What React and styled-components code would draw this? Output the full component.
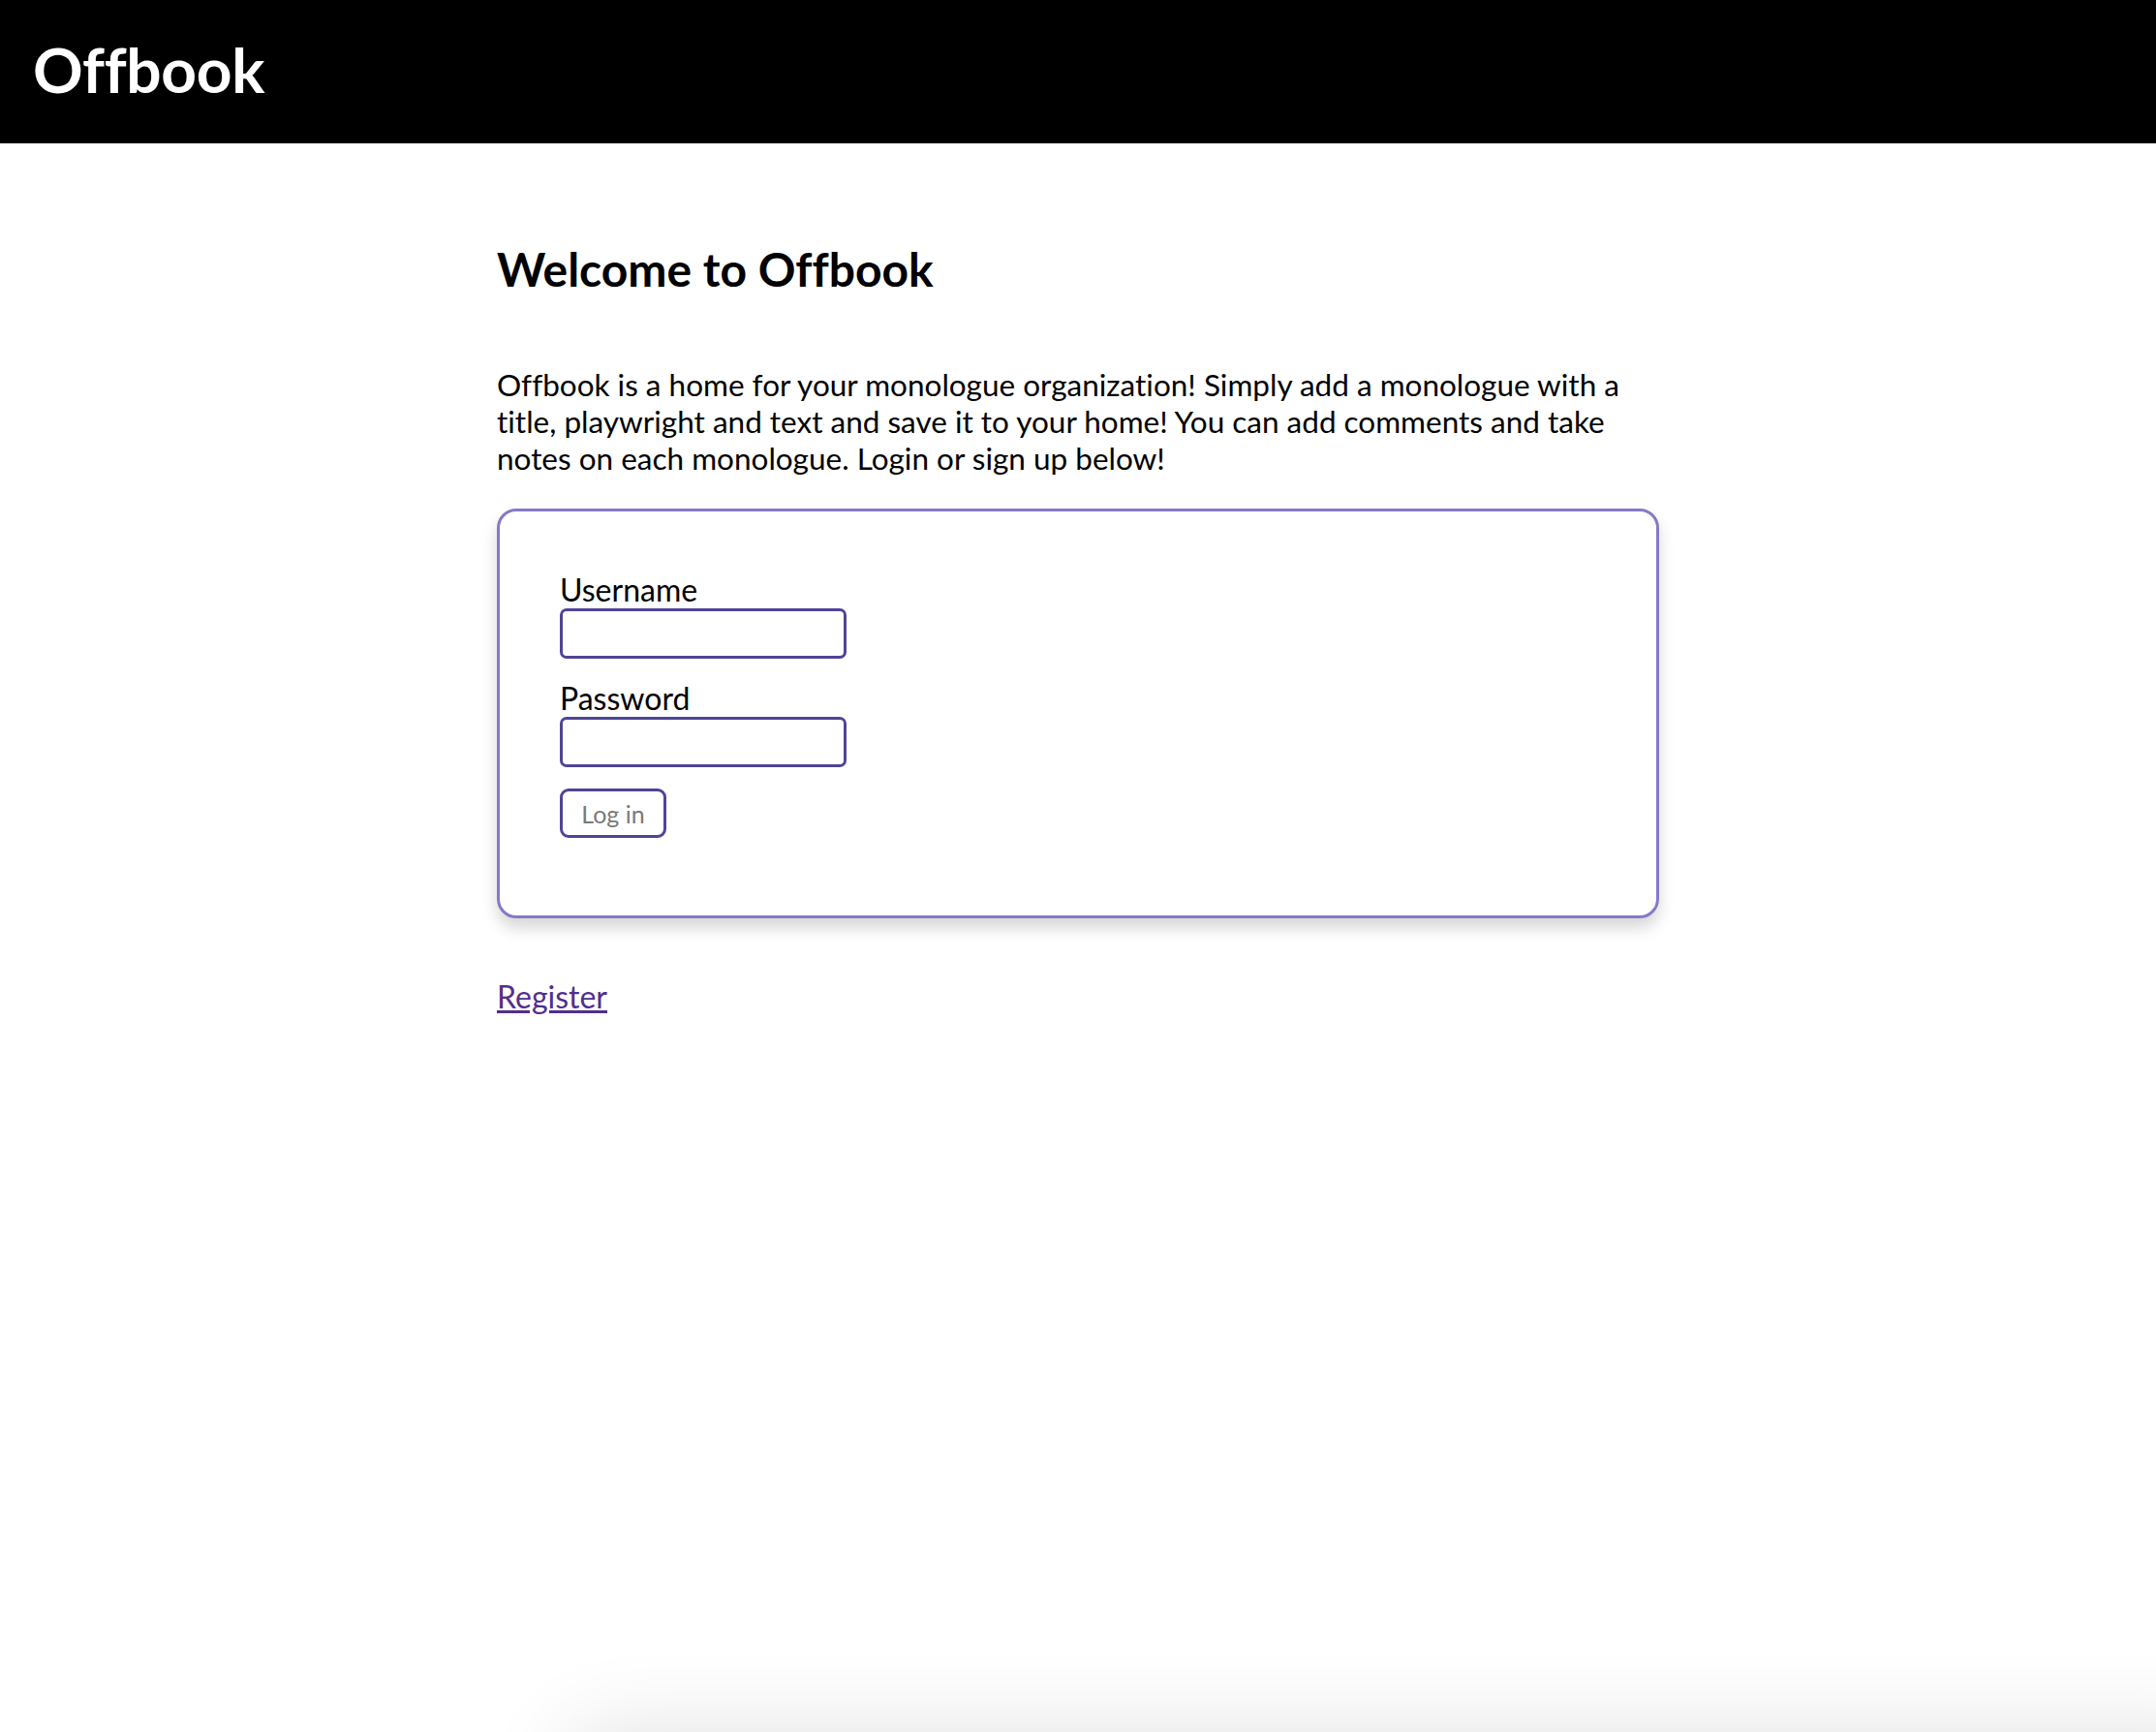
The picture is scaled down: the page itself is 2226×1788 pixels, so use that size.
import { useState } from "react";
import styled, { createGlobalStyle } from "styled-components";

const GlobalStyle = createGlobalStyle`
  body {
    margin: 0;
    background: #fff;
    font-family: Lato, "Open Sans", sans-serif;
    color: #000;
    font-variant-ligatures: no-common-ligatures;
  }
`;

const Header = styled.header`
  height: 148px;
  background: #000;
  display: flex;
  align-items: center;
  padding-left: 34px;
`;

const Logo = styled.div`
  color: #fff;
  font-size: 64px;
  font-weight: 700;
  letter-spacing: -0.3px;
  margin-top: -6px;
`;

const Main = styled.main`
  width: 1200px;
  margin: 0 auto;
  padding-top: 101px;
`;

const Title = styled.h1`
  margin: 0;
  font-size: 48px;
  font-weight: 700;
`;

const Intro = styled.p`
  margin: 72px 0 33px;
  font-size: 31.5px;
  line-height: 38px;
`;

const Card = styled.div`
  border: 3px solid #8878c8;
  border-radius: 20px;
  padding: 61px 62px 80px;
  box-shadow: 0 10px 16px rgba(0, 0, 0, 0.16);
`;

const Label = styled.label`
  display: block;
  font-size: 32px;
`;

const Input = styled.input`
  display: block;
  box-sizing: border-box;
  width: 296px;
  height: 52px;
  border: 3px solid #4f4597;
  border-radius: 7px;
  outline: none;
  padding: 0 10px;
  font-size: 24px;
  font-family: Lato, sans-serif;
  margin-bottom: ${(p) => p.$gap || 0}px;
`;

const Button = styled.button`
  box-sizing: border-box;
  width: 110px;
  height: 51px;
  border: 3px solid #4f4597;
  border-radius: 9px;
  background: #fff;
  color: #7a7a7a;
  font-family: Lato, sans-serif;
  font-size: 25px;
  padding: 0;
  cursor: pointer;
`;

const RegisterLink = styled.a`
  display: block;
  width: fit-content;
  margin-top: 61px;
  font-size: 32px;
  color: #522e8c;
  text-decoration: underline;
`;

const BottomGlow = styled.div`
  position: fixed;
  top: 100vh;
  left: 580px;
  right: -100px;
  height: 100px;
  border-radius: 60px;
  box-shadow: 0 0 90px rgba(0, 0, 0, 0.12);
`;

const App = () => {
  const [username, setUsername] = useState("");
  const [password, setPassword] = useState("");

  return (
    <>
      <GlobalStyle />
      <Header>
        <Logo>Offbook</Logo>
      </Header>
      <Main>
        <Title>Welcome to Offbook</Title>
        <Intro>
          Offbook is a home for your monologue organization! Simply add a
          monologue with a title, playwright and text and save it to your home!
          You can add comments and take notes on each monologue. Login or sign
          up below!
        </Intro>
        <Card>
          <form onSubmit={(e) => e.preventDefault()}>
            <Label htmlFor="username">Username</Label>
            <Input
              id="username"
              type="text"
              value={username}
              $gap={21}
              onChange={(e) => setUsername(e.target.value)}
            />
            <Label htmlFor="password">Password</Label>
            <Input
              id="password"
              type="password"
              value={password}
              $gap={22}
              onChange={(e) => setPassword(e.target.value)}
            />
            <Button type="submit">Log in</Button>
          </form>
        </Card>
        <RegisterLink href="#register">Register</RegisterLink>
      </Main>
      <BottomGlow />
    </>
  );
};

export default App;
